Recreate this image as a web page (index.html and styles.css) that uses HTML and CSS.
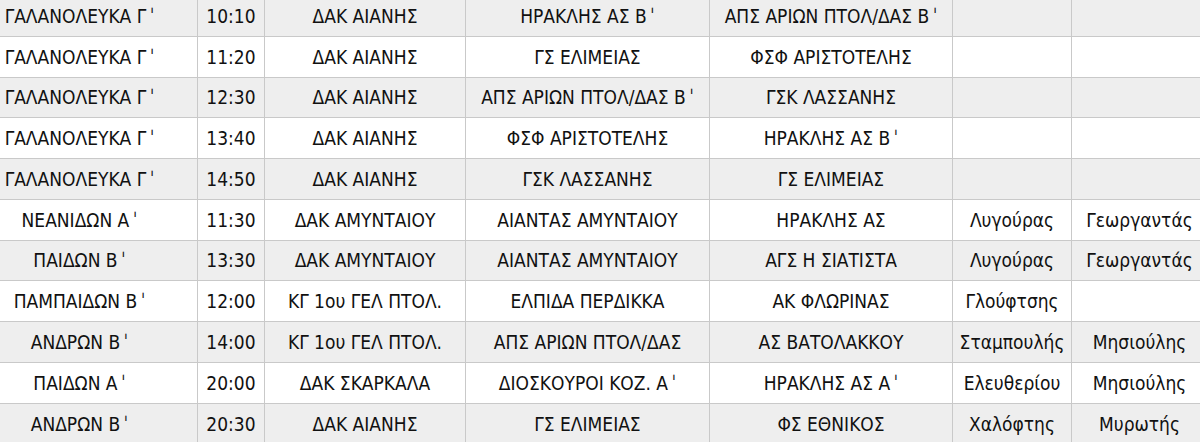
FILE: index.html
```html
<!DOCTYPE html>
<html lang="el">
<head>
<meta charset="utf-8">
<title>Πρόγραμμα αγώνων</title>
<link rel="stylesheet" href="styles.css">
</head>
<body>
<table class="schedule">
  <colgroup>
    <col class="c-cat"><col class="c-time"><col class="c-venue"><col class="c-home"><col class="c-away"><col class="c-ref1"><col class="c-ref2">
  </colgroup>
  <tbody>
    <tr class="alt"><td>ΓΑΛΑΝΟΛΕΥΚΑ Γ&#8201;ˈ</td><td>10:10</td><td>ΔΑΚ ΑΙΑΝΗΣ</td><td>ΗΡΑΚΛΗΣ ΑΣ Β&#8201;ˈ</td><td>ΑΠΣ ΑΡΙΩΝ ΠΤΟΛ/ΔΑΣ Β&#8201;ˈ</td><td></td><td></td></tr>
    <tr><td>ΓΑΛΑΝΟΛΕΥΚΑ Γ&#8201;ˈ</td><td>11:20</td><td>ΔΑΚ ΑΙΑΝΗΣ</td><td>ΓΣ ΕΛΙΜΕΙΑΣ</td><td>ΦΣΦ ΑΡΙΣΤΟΤΕΛΗΣ</td><td></td><td></td></tr>
    <tr class="alt"><td>ΓΑΛΑΝΟΛΕΥΚΑ Γ&#8201;ˈ</td><td>12:30</td><td>ΔΑΚ ΑΙΑΝΗΣ</td><td>ΑΠΣ ΑΡΙΩΝ ΠΤΟΛ/ΔΑΣ Β&#8201;ˈ</td><td>ΓΣΚ ΛΑΣΣΑΝΗΣ</td><td></td><td></td></tr>
    <tr><td>ΓΑΛΑΝΟΛΕΥΚΑ Γ&#8201;ˈ</td><td>13:40</td><td>ΔΑΚ ΑΙΑΝΗΣ</td><td>ΦΣΦ ΑΡΙΣΤΟΤΕΛΗΣ</td><td>ΗΡΑΚΛΗΣ ΑΣ Β&#8201;ˈ</td><td></td><td></td></tr>
    <tr class="alt"><td>ΓΑΛΑΝΟΛΕΥΚΑ Γ&#8201;ˈ</td><td>14:50</td><td>ΔΑΚ ΑΙΑΝΗΣ</td><td>ΓΣΚ ΛΑΣΣΑΝΗΣ</td><td>ΓΣ ΕΛΙΜΕΙΑΣ</td><td></td><td></td></tr>
    <tr><td>ΝΕΑΝΙΔΩΝ Α&#8201;ˈ</td><td>11:30</td><td>ΔΑΚ ΑΜΥΝΤΑΙΟΥ</td><td>ΑΙΑΝΤΑΣ ΑΜΥΝΤΑΙΟΥ</td><td>ΗΡΑΚΛΗΣ ΑΣ</td><td>Λυγούρας</td><td>Γεωργαντάς</td></tr>
    <tr class="alt"><td>ΠΑΙΔΩΝ Β&#8201;ˈ</td><td>13:30</td><td>ΔΑΚ ΑΜΥΝΤΑΙΟΥ</td><td>ΑΙΑΝΤΑΣ ΑΜΥΝΤΑΙΟΥ</td><td>ΑΓΣ Η ΣΙΑΤΙΣΤΑ</td><td>Λυγούρας</td><td>Γεωργαντάς</td></tr>
    <tr><td>ΠΑΜΠΑΙΔΩΝ Β&#8201;ˈ</td><td>12:00</td><td>ΚΓ 1ου ΓΕΛ ΠΤΟΛ.</td><td>ΕΛΠΙΔΑ ΠΕΡΔΙΚΚΑ</td><td>ΑΚ ΦΛΩΡΙΝΑΣ</td><td>Γλούφτσης</td><td></td></tr>
    <tr class="alt"><td>ΑΝΔΡΩΝ Β&#8201;ˈ</td><td>14:00</td><td>ΚΓ 1ου ΓΕΛ ΠΤΟΛ.</td><td>ΑΠΣ ΑΡΙΩΝ ΠΤΟΛ/ΔΑΣ</td><td>ΑΣ ΒΑΤΟΛΑΚΚΟΥ</td><td>Σταμπουλής</td><td>Μησιούλης</td></tr>
    <tr><td>ΠΑΙΔΩΝ Α&#8201;ˈ</td><td>20:00</td><td>ΔΑΚ ΣΚΑΡΚΑΛΑ</td><td>ΔΙΟΣΚΟΥΡΟΙ ΚΟΖ. Α&#8201;ˈ</td><td>ΗΡΑΚΛΗΣ ΑΣ Α&#8201;ˈ</td><td>Ελευθερίου</td><td>Μησιούλης</td></tr>
    <tr class="alt"><td>ΑΝΔΡΩΝ Β&#8201;ˈ</td><td>20:30</td><td>ΔΑΚ ΑΙΑΝΗΣ</td><td>ΓΣ ΕΛΙΜΕΙΑΣ</td><td>ΦΣ ΕΘΝΙΚΟΣ</td><td>Χαλόφτης</td><td>Μυρωτής</td></tr>
  </tbody>
</table>
</body>
</html>
```

FILE: styles.css
```css
html, body {
  margin: 0;
  padding: 0;
  background: #ffffff;
  overflow: hidden;
}

.schedule {
  table-layout: fixed;
  border-collapse: collapse;
  width: 1246px;
  margin: -5px 0 0 -39px;
  font-family: "DejaVu Sans Condensed", "DejaVu Sans", sans-serif;
  font-size: 19px;
  color: #111111;
}

.c-cat { width: 236px; }
.c-time { width: 67px; }
.c-venue { width: 201px; }
.c-home { width: 244px; }
.c-away { width: 243px; }
.c-ref1 { width: 119px; }
.c-ref2 { width: 136px; }

.schedule tr {
  height: 40.78px;
  background: #ffffff;
}

.schedule tr.alt {
  background: #eeeeee;
}

.schedule td {
  border: 1px solid #c9c9c9;
  padding: 0;
  text-align: center;
  vertical-align: middle;
  white-space: nowrap;
  overflow: hidden;
}
```
